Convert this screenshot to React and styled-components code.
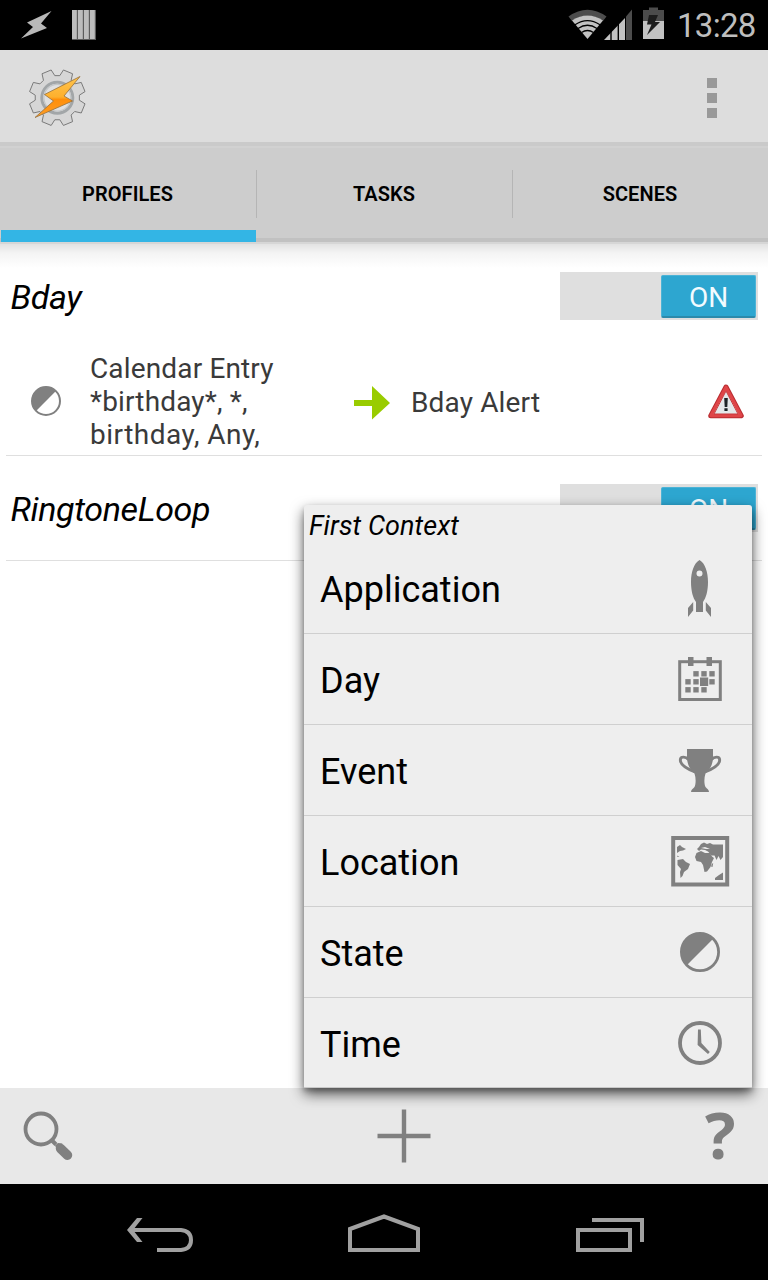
import React from 'react';
import styled, { createGlobalStyle } from 'styled-components';

const GlobalStyle = createGlobalStyle`
  * { box-sizing: border-box; }
  html, body { margin: 0; padding: 0; background: #000; }
  body { font-family: Roboto, "Liberation Sans", sans-serif; color: #000; }
  svg { display: block; flex: none; }
`;

const Screen = styled.div`
  position: relative;
  width: 768px;
  height: 1280px;
  display: flex;
  flex-direction: column;
  overflow: hidden;
  background: #fff;
`;

const StatusBar = styled.header`
  height: 50px;
  flex: none;
  background: #000;
  display: flex;
  justify-content: space-between;
`;

const Clock = styled.span`
  width: 79px;
  margin-right: 12px;
  font-size: 33px;
  line-height: 52px;
  letter-spacing: -0.7px;
  white-space: nowrap;
  color: #bebebe;
`;

const StatusGroup = styled.div`
  display: flex;
`;

const ActionBar = styled.div`
  height: 92px;
  flex: none;
  background: #ddd;
  display: flex;
  align-items: center;
  justify-content: space-between;
  padding: 4px 51px 0 26px;
`;

const Overflow = styled.div`
  display: flex;
  flex-direction: column;
  gap: 5px;
`;

const OverflowDot = styled.i`
  width: 10px;
  height: 10px;
  background: #999;
`;

const TabBar = styled.nav`
  height: 102px;
  flex: none;
  display: flex;
  background: linear-gradient(#cacaca 0 4px, #d1d1d1 4px 6px, #cdcdcd 6px 96px, #c1c1c1 96px 100px, #d6d6d6 100px);
`;

const Tab = styled.div`
  width: ${(p) => (p.$active ? 255 : 256)}px;
  margin: 0 0 2px ${(p) => (p.$active ? 1 : 0)}px;
  display: flex;
  flex-direction: column;
  padding-top: 28px;
  border-bottom: 12px solid ${(p) => (p.$active ? '#33b5e5' : 'transparent')};
`;

const TabLabel = styled.span`
  height: 48px;
  padding-right: ${(p) => (p.$divided ? 1 : 3)}px;
  border-left: 1px solid ${(p) => (p.$divided ? '#b5b5b5' : 'transparent')};
  text-align: center;
  font-size: 20px;
  font-weight: 600;
  letter-spacing: 0.08px;
  line-height: 49px;
`;

const Content = styled.main`
  flex: 1;
  min-height: 0;
  background: linear-gradient(#e2e2e2, #f4f4f4 9px, #fff 24px);
`;

const Profile = styled.section`
  margin: 0 6px;
  padding: 4px 4px 0;
  border-bottom: 1px solid #dfdfdf;
  height: ${(p) => p.$height}px;
`;

const ProfileHeader = styled.div`
  height: 96px;
  display: flex;
  align-items: center;
  justify-content: space-between;
`;

const ProfileName = styled.h2`
  margin: 0;
  padding: 2px 0 0 0.5px;
  font-size: 34px;
  font-weight: 400;
  font-style: italic;
  letter-spacing: -0.35px;
`;

const SwitchTrack = styled.div`
  width: 198px;
  height: 48px;
  background: #dfdfdf;
  display: flex;
  justify-content: flex-end;
  padding: 3px 2px 2px 0;
`;

const SwitchThumb = styled.span`
  width: 95px;
  height: 43px;
  border-radius: 2px;
  border: 1px solid #4cb3d6;
  border-bottom: 2px solid #2c8aab;
  background: #2da6d0;
  color: #f2fbff;
  font-size: 28px;
  line-height: 43px;
  text-align: center;
`;

const Details = styled.div`
  display: flex;
  height: 111px;
  color: #3a3a3a;
  font-size: 28px;
  line-height: 33px;
  letter-spacing: 0.15px;
`;

const ContextText = styled.p`
  margin: 8px 0 0 28px;
  width: 264px;
`;

const ContextLine = styled.span`
  display: block;
  letter-spacing: ${(p) => p.$tracking}px;
`;

const TaskText = styled.p`
  margin: 42px 0 0 21px;
  width: 297px;
`;

const IconSlot = styled.div`
  margin-top: ${(p) => p.$top}px;
  margin-left: ${(p) => p.$left || 0}px;
`;

const Popup = styled.div`
  position: absolute;
  left: 304px;
  top: 505px;
  width: 448px;
  height: 583px;
  border-radius: 3px 3px 0 0;
  background: #eee;
  border-bottom: 1px solid #c8c8c8;
  box-shadow: 0 6px 14px rgba(0, 0, 0, 0.65), 0 3px 5px rgba(0, 0, 0, 0.2);
`;

const PopupTitle = styled.div`
  height: 38px;
  padding-left: 5px;
  font-size: 27px;
  font-style: italic;
  line-height: 42px;
  letter-spacing: 0.08px;
`;

const PopupRow = styled.div`
  height: 91px;
  display: flex;
  align-items: center;
  justify-content: space-between;
  padding: 0 20px 0 16px;
  border-bottom: 1px solid #cfcfcf;
  &:last-child { border-bottom-color: transparent; }
`;

const PopupLabel = styled.span`
  padding-top: 4px;
  font-size: 36px;
`;

const BottomBar = styled.footer`
  height: 96px;
  flex: none;
  background: #e8e8e8;
  display: flex;
  justify-content: space-between;
  padding: 0 31px 0 22px;
  align-items: center;
`;

const AddButton = styled.div`
  margin-left: 24px;
`;

const HelpMark = styled.span`
  width: 32px;
  height: 96px;
  font-family: "Open Sans", sans-serif;
  font-weight: 700;
  font-size: 64px;
  line-height: 93px;
  color: #808080;
`;

const NavBar = styled.div`
  height: 96px;
  flex: none;
  background: #000;
  display: flex;
  justify-content: space-between;
  align-items: center;
  padding: 0 120px;
`;

const G = '#808080';

const NotificationIcons = () => (
  <svg width="110" height="50">
    <path d="M51.500 11 L27 22.500 L33 27 L21 38.500 L47 28 L41 23.500 Z" fill="#b8b8b8" />
    {[72, 78, 84, 90].map((x) => (
      <g key={x}>
        <rect x={x} y="10" width="6" height="30" fill="#5c5c5c" />
        <rect x={x} y="10" width="4.800" height="29" fill="#bdbdbd" />
      </g>
    ))}
  </svg>
);

const SystemIcons = () => (
  <svg width="110" height="50" viewBox="567 0 110 50">
    <path d="M568.500 16.500 Q587.500 3 606.500 16.500 L603 21 Q587.500 10.500 572 21 Z" fill="#4c4c4c" />
    <path d="M572 20.500 Q587.500 10.500 603 20.500 L587.500 39 Z" fill="#c2c2c2" />
    <g fill="none" stroke="#000" strokeWidth="1.300">
      <path d="M575 24.800 Q587.500 16.500 600 24.800" />
      <path d="M578 28.500 Q587.500 22 597 28.500" />
      <path d="M581.500 32.500 Q587.500 28.500 593.500 32.500" />
    </g>
    <path d="M604 40 L625 18 V40 Z" fill="#c2c2c2" />
    <path d="M626 16.500 L632 9.500 V40 H626 Z" fill="#4c4c4c" />
    <path d="M611 20V40M618.300 15V40" stroke="#000" strokeWidth="1.400" />
    <path d="M643 10H649V7.500H658V10H664V21H643Z" fill="#4c4c4c" />
    <rect x="643" y="21" width="21" height="18" fill="#c2c2c2" />
    <path d="M649 15H658L655 22H660L647 35L651.500 24.500H647Z" fill="#1d1d1d" />
  </svg>
);

const gearPath = (() => {
  const pts = [];
  for (let i = 0; i < 8; i += 1) {
    const c = (i * 45 + 22.5) * (Math.PI / 180);
    [[-0.28, 22.2], [-0.175, 28.4], [0.175, 28.4], [0.28, 22.2]].forEach(([a, r]) => {
      const t = c + a;
      pts.push(`${(31.3 + r * Math.cos(t)).toFixed(2)} ${(30.7 + r * Math.sin(t)).toFixed(2)}`);
    });
  }
  return `M${pts.join('L')}Z`;
})();

const AppLogo = () => (
  <svg width="64" height="62" viewBox="0 0 64 62">
    <defs>
      <linearGradient id="bolt" x1="0" y1="0" x2="0" y2="1">
        <stop offset="0" stopColor="#ffc44d" />
        <stop offset="0.5" stopColor="#fdb02e" />
        <stop offset="0.56" stopColor="#ff8f0a" />
        <stop offset="1" stopColor="#ff9d25" />
      </linearGradient>
    </defs>
    <path d={gearPath} fill="#d6d6d6" stroke="#6f6f6f" strokeWidth="0.900" strokeLinejoin="round" />
    <circle cx="31.300" cy="30.700" r="15.500" fill="#e0e0e0" stroke="#a2a6a8" strokeWidth="3" />
    <circle cx="31.300" cy="30.700" r="13.400" fill="none" stroke="#c3c6c8" strokeWidth="1.200" />
    <path d="M54 9.500 L18.500 27.500 L27.500 34 L9 50.500 L46.500 34 L38 29 Z" fill="url(#bolt)" stroke="#96703c" strokeWidth="0.800" strokeLinejoin="round" />
  </svg>
);

const HalfCircle = ({ size, r, stroke }) => (
  <svg width={size} height={size} viewBox={`${-size / 2} ${-size / 2} ${size} ${size}`}>
    <circle r={r - stroke / 2} fill="none" stroke={G} strokeWidth={stroke} />
    <path d={`M${r * 0.66} ${-r * 0.66} L${-r * 0.66} ${r * 0.66} A${r * 0.933} ${r * 0.933} 0 0 1 ${r * 0.66} ${-r * 0.66}Z`} fill={G} />
  </svg>
);

const ArrowIcon = () => (
  <svg width="36" height="36" viewBox="0 0 36 36">
    <path d="M0 15H18V1L36 18L18 34.500V21H0Z" fill="#99cc00" />
  </svg>
);

const AlertIcon = () => (
  <svg width="36" height="36" viewBox="0 0 36 36">
    <path d="M18 3L33.300 31.800H2.700Z" fill="#e4e8ea" stroke="#b92c30" strokeWidth="5" strokeLinejoin="round" />
    <path d="M18 3.200L33 31.600H3Z" fill="#e4e8ea" stroke="#df4548" strokeWidth="3.200" strokeLinejoin="round" />
    <path d="M18 7L30 30H6Z" fill="#e4e8ea" stroke="#c8383b" strokeWidth="1" />
    <path d="M16.200 14H19.800L19.300 23H16.700ZM16.400 24.300H19.600V27H16.400Z" fill="#1d2427" />
  </svg>
);

const RocketIcon = () => (
  <svg width="64" height="64" fill={G}>
    <path fillRule="evenodd" d="M31.500 4C37 7 40 16 40 26C40 35 38 42 35 46V56H28V46C25 42 23 35 23 26C23 16 26 7 31.500 4ZM31.500 14.600A3 3 0 1 0 31.500 20.600A3 3 0 1 0 31.500 14.600Z" />
    <path d="M25.200 46V54.500L20 61V52ZM37.800 46V54.500L43 61V52Z" />
  </svg>
);

const CalendarIcon = () => (
  <svg width="64" height="64" fill={G}>
    <rect x="11.700" y="14.700" width="40.600" height="37.800" fill="none" stroke={G} strokeWidth="3" />
    <rect x="20" y="10" width="5.500" height="9" />
    <rect x="38.500" y="10" width="5.500" height="9" />
    {[[25, 24], [33, 24], [41, 24], [17, 32], [25, 32], [41, 32], [17, 40], [25, 40], [33, 40]].map(([x, y]) => (
      <rect key={`${x}-${y}`} x={x + 0.3} y={y + 0.1} width="5.400" height="5.400" />
    ))}
    <rect x="32" y="30.500" width="8.200" height="8.500" />
  </svg>
);

const TrophyIcon = () => (
  <svg width="64" height="64" fill={G}>
    <path d="M19 11H45V19C45 26 42.500 31 37.500 35.500C36 40 36 46 37.500 49C39 51 41 51.500 41 54H23C23 51.500 25 51 26.500 49C28 46 28 40 26.500 35.500C21.500 31 19 26 19 19Z" />
    <path d="M20.500 21.500C18 18.500 12.300 18 12.300 22C12.300 26.500 18 30.500 27 34M43.500 21.500C46 18.500 51.700 18 51.700 22C51.700 26.500 46 30.500 37 34" fill="none" stroke={G} strokeWidth="2.900" />
  </svg>
);

const MapIcon = () => (
  <svg width="64" height="64" fill={G}>
    <rect x="5.200" y="9" width="54" height="46.500" fill="none" stroke={G} strokeWidth="4" />
    <path d="M9 18L12 16L14 18L18 20L15 21.500L12 22L9 24ZM9 26.500L11.500 28L9.500 28Z" />
    <path d="M9.500 31L15 30L18 33L22 35L20 40L16 43L14.500 47L12.500 49L12 43L13 40L9.500 36Z" />
    <path d="M28.500 24L33 22L37 24L42 24L44 27.500L46 29L44 33L42.500 38L39 42.500L36.500 43L35 36L33 33L28.500 32L27 28Z" />
    <path d="M29 20L31 18L33 15L36 13.500L39 15L42 14L45 15.500L55 15.500V28L52.500 31L50.500 27L48.500 31L46.500 26.500L43.500 26.500L40 22.500L37 21L33 20.500L31 22Z" />
    <path d="M33 19L37 18L42 20L38 20Z" fill="#eee" />
    <path d="M43.800 35L45.200 34L44.500 38L43 37.500ZM47 49L51 46L55 43.500V51H47Z" />
  </svg>
);

const ClockIcon = () => (
  <svg width="64" height="64" fill="none" stroke={G}>
    <circle cx="32" cy="32" r="20" strokeWidth="3.800" />
    <path d="M30 18.500H32.800L33.400 32L41.800 41L40 43L29.600 34Z" fill={G} stroke="none" />
  </svg>
);

const SearchIcon = () => (
  <svg width="56" height="56" viewBox="22 1108 56 56">
    <circle cx="41" cy="1129" r="15.500" fill="none" stroke={G} strokeWidth="3.800" />
    <path d="M51.500 1140L56 1144.500" stroke={G} strokeWidth="4" />
    <path d="M60.500 1148.500L67.500 1155.200" stroke={G} strokeWidth="9.500" strokeLinecap="round" />
    <path d="M55 1145.500L58 1143L62.500 1143.500L57 1150Z" fill={G} />
  </svg>
);

const PlusIcon = () => (
  <svg width="54" height="54">
    <path d="M0.500 27H53.500M27 0.500V53.500" stroke={G} strokeWidth="4.400" />
  </svg>
);

const BackIcon = () => (
  <svg width="80" height="96" viewBox="120 1184 80 96" fill="none" stroke="#a0a0a0">
    <path d="M131 1230H181Q191 1231 191 1240Q191 1249 181 1250H157" strokeWidth="4" />
    <path d="M137 1218H142.500L133 1230L142.500 1242H137L127 1230Z" fill="#a0a0a0" stroke="none" />
  </svg>
);

const HomeIcon = () => (
  <svg width="80" height="96" viewBox="344 1184 80 96">
    <path d="M350 1229L384 1216.500L418 1229V1250H350Z" fill="none" stroke="#a0a0a0" strokeWidth="4" />
  </svg>
);

const RecentsIcon = () => (
  <svg width="80" height="96" viewBox="568 1184 80 96" fill="none" stroke="#a0a0a0" strokeWidth="4">
    <path d="M578 1230H630V1250H578ZM592 1220H642V1242" />
  </svg>
);

const contexts = [
  ['Application', <RocketIcon />],
  ['Day', <CalendarIcon />],
  ['Event', <TrophyIcon />],
  ['Location', <MapIcon />],
  ['State', <HalfCircle size={64} r={20} stroke={2.8} />],
  ['Time', <ClockIcon />],
];

const Switch = () => (
  <SwitchTrack>
    <SwitchThumb>ON</SwitchThumb>
  </SwitchTrack>
);

export default function App() {
  return (
    <Screen>
      <GlobalStyle />
      <StatusBar>
        <NotificationIcons />
        <StatusGroup>
          <SystemIcons />
          <Clock>13:28</Clock>
        </StatusGroup>
      </StatusBar>
      <ActionBar>
        <AppLogo />
        <Overflow>
          <OverflowDot />
          <OverflowDot />
          <OverflowDot />
        </Overflow>
      </ActionBar>
      <TabBar>
        {['PROFILES', 'TASKS', 'SCENES'].map((name, i) => (
          <Tab key={name} $active={i === 0}>
            <TabLabel $divided={i > 0}>{name}</TabLabel>
          </Tab>
        ))}
      </TabBar>
      <Content>
        <Profile $height={212}>
          <ProfileHeader>
            <ProfileName>Bday</ProfileName>
            <Switch />
          </ProfileHeader>
          <Details>
            <IconSlot $top={41} $left={20}>
              <HalfCircle size={32} r={15} stroke={2} />
            </IconSlot>
            <ContextText>
              <ContextLine $tracking={0.15}>Calendar Entry</ContextLine>
              <ContextLine $tracking={0.15}>*birthday*, *,</ContextLine>
              <ContextLine $tracking={0.5}>birthday, Any,</ContextLine>
            </ContextText>
            <IconSlot $top={41}>
              <ArrowIcon />
            </IconSlot>
            <TaskText>Bday Alert</TaskText>
            <IconSlot $top={40}>
              <AlertIcon />
            </IconSlot>
          </Details>
        </Profile>
        <Profile $height={105}>
          <ProfileHeader>
            <ProfileName>RingtoneLoop</ProfileName>
            <Switch />
          </ProfileHeader>
        </Profile>
      </Content>
      <BottomBar>
        <SearchIcon />
        <AddButton>
          <PlusIcon />
        </AddButton>
        <HelpMark>?</HelpMark>
      </BottomBar>
      <NavBar>
        <BackIcon />
        <HomeIcon />
        <RecentsIcon />
      </NavBar>
      <Popup>
        <PopupTitle>First Context</PopupTitle>
        {contexts.map(([name, icon]) => (
          <PopupRow key={name}>
            <PopupLabel>{name}</PopupLabel>
            {icon}
          </PopupRow>
        ))}
      </Popup>
    </Screen>
  );
}
